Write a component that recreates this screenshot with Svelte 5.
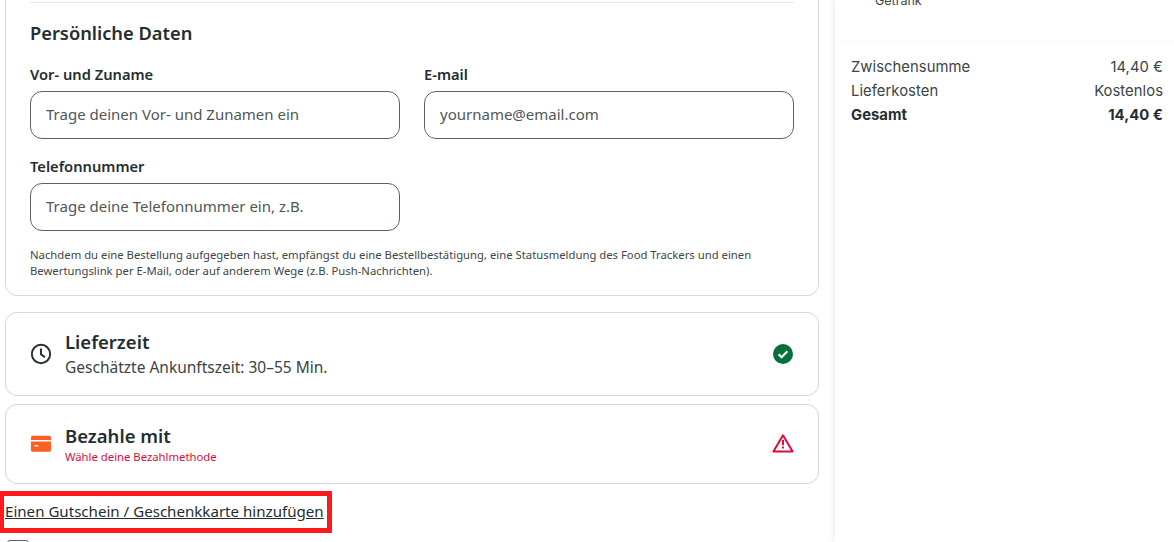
<script>
	const rows = [
		{ label: 'Zwischensumme', value: '14,40 €' },
		{ label: 'Lieferkosten', value: 'Kostenlos' },
		{ label: 'Gesamt', value: '14,40 €', total: true }
	];
</script>

<div class="page">
	<main class="main">
		<section class="card personal">
			<div class="rule"></div>
			<h2>Persönliche Daten</h2>
			<div class="fields">
				<label class="field">
					<span>Vor- und Zuname</span>
					<input type="text" placeholder="Trage deinen Vor- und Zunamen ein" />
				</label>
				<label class="field">
					<span>E-mail</span>
					<input type="text" placeholder="yourname@email.com" />
				</label>
				<label class="field">
					<span>Telefonnummer</span>
					<input type="text" placeholder="Trage deine Telefonnummer ein, z.B." />
				</label>
			</div>
			<p class="notice">
				Nachdem du eine Bestellung aufgegeben hast, empfängst du eine Bestellbestätigung, eine Statusmeldung des Food Trackers und einen Bewertungslink per E-Mail, oder auf anderem Wege (z.B. Push-Nachrichten).
			</p>
		</section>

		<section class="card step delivery">
			<svg class="icon" viewBox="0 0 24 24" aria-hidden="true">
				<circle cx="12" cy="12" r="10" fill="none" stroke="#242e30" stroke-width="2.1" />
				<path d="M12 6.800V12.400L15.600 15" fill="none" stroke="#242e30" stroke-width="2.100" stroke-linecap="round" stroke-linejoin="round" />
			</svg>
			<div class="step-text">
				<h3>Lieferzeit</h3>
				<p>Geschätzte Ankunftszeit: 30–55 Min.</p>
			</div>
			<svg class="status" viewBox="0 0 20 20" aria-hidden="true">
				<circle cx="10" cy="10" r="10" fill="#04703c" />
				<path d="M5.600 10.300L8.600 13.200L14.400 7.200" fill="none" stroke="#fff" stroke-width="2.200" />
			</svg>
		</section>

		<section class="card step payment">
			<svg class="icon" viewBox="0 0 24 24" aria-hidden="true">
				<path d="M3 3H21A2 2 0 0 1 23 5V7.500H1V5A2 2 0 0 1 3 3Z" fill="#fa5f25" />
				<path fill-rule="evenodd" d="M1 9.200H23V18.500A2 2 0 0 1 21 20.500H3A2 2 0 0 1 1 18.500ZM5 13.200V14.800H9V13.200Z" fill="#fa5f25" />
			</svg>
			<div class="step-text">
				<h3>Bezahle mit</h3>
				<p class="error">Wähle deine Bezahlmethode</p>
			</div>
			<svg class="status warn" viewBox="0 0 22 20" aria-hidden="true">
				<path d="M11 1.300L20.600 17.500H1.400Z" fill="none" stroke="#df0b3c" stroke-width="2" stroke-linejoin="round" />
				<path d="M11 6V11.200M11 12.600V14.600" fill="none" stroke="#df0b3c" stroke-width="2" />
			</svg>
		</section>

		<a class="voucher" href="#voucher">Einen Gutschein / Geschenkkarte hinzufügen</a>
		<div class="checkbox"></div>
	</main>

	<aside class="side">
		<div class="item-note">Getränk</div>
		<div class="totals">
			{#each rows as row}
				<div class="row" class:total={row.total}>
					<span>{row.label}</span>
					<span>{row.value}</span>
				</div>
			{/each}
		</div>
	</aside>
</div>

<style>
	:global(body) {
		margin: 0;
		background: #fff;
		overflow: hidden;
	}

	.page {
		display: flex;
		height: 542px;
		overflow: hidden;
		font-family: "Noto Sans", "Open Sans", sans-serif;
		color: #242e30;
	}

	.main {
		width: 835px;
		flex-shrink: 0;
		padding: 0 16px 0 5px;
		box-sizing: border-box;
	}

	.card {
		border: 1px solid #d7d7d7;
		border-radius: 12px;
		background: #fff;
		box-sizing: border-box;
	}

	.personal {
		margin-top: -20px;
		height: 316px;
		padding: 21px 24px 0;
	}

	.rule {
		height: 1px;
		background: #e8e8e8;
	}

	h2 {
		margin: 18px 0 0;
		font-size: 18.3px;
		line-height: 24px;
		font-weight: 600;
	}

	.fields {
		display: grid;
		grid-template-columns: 370px 370px;
		column-gap: 24px;
		row-gap: 18px;
		margin-top: 20px;
	}

	.field {
		display: flex;
		flex-direction: column;
		gap: 8px;
	}

	.field span {
		font-size: 14.7px;
		line-height: 18px;
		font-weight: 600;
	}

	.field input {
		height: 48px;
		padding: 0 15px 2px;
		border: 1px solid #5c6364;
		border-radius: 12px;
		box-sizing: border-box;
		font: inherit;
		font-size: 15px;
		outline: none;
	}

	.field input::placeholder {
		color: #4f5759;
		opacity: 1;
	}

	.notice {
		margin: 16px 0 0;
		font-size: 11.3px;
		line-height: 16px;
		color: #3d4648;
	}

	.step {
		display: flex;
		align-items: center;
		padding: 0 25px 0 24px;
	}

	.delivery {
		height: 84px;
		margin-top: 16px;
	}

	.payment {
		height: 80px;
		margin-top: 8px;
	}

	.icon {
		width: 22px;
		height: 22px;
		flex-shrink: 0;
	}

	.step-text {
		flex: 1;
		margin-left: 13px;
	}

	h3 {
		margin: 0;
		font-size: 18.5px;
		line-height: 24px;
		font-weight: 600;
	}

	.step-text p {
		margin: 2px 0 0;
		font-size: 15.5px;
		line-height: 22px;
		color: #3a4446;
	}

	.step-text p.error {
		margin: 1px 0 0;
		font-size: 11.3px;
		line-height: 16px;
		color: #df0b3c;
	}

	.status {
		width: 20px;
		height: 20px;
		flex-shrink: 0;
	}

	.status.warn {
		width: 22px;
		margin-right: -1px;
	}

	.voucher {
		display: block;
		width: fit-content;
		margin: 7px 0 0 -6px;
		padding: 5px 3px 7px 1px;
		border: 5px solid #ff1a1f;
		font-size: 15.1px;
		line-height: 20px;
		color: #242e30;
		text-decoration: underline;
	}

	.checkbox {
		width: 22px;
		height: 20px;
		margin: 7px 0 0 2px;
		border: 1px solid #5c6364;
		border-radius: 3px;
		box-sizing: border-box;
	}

	.side {
		flex: 1;
		min-width: 0;
		padding: 0 11px 0 16px;
		box-shadow: -3px 0 6px rgba(0, 0, 0, 0.06);
		font-family: "Inter", "Open Sans", sans-serif;
	}

	.item-note {
		margin: -7px 0 0 24px;
		height: 16px;
		font-size: 12.5px;
		line-height: 16px;
		color: #3d4648;
	}

	.totals {
		margin: 31px -11px 0 -16px;
		padding: 16px 11px 0 16px;
		border-top: 1px solid #fafafa;
		display: flex;
		flex-direction: column;
		gap: 4px;
	}

	.row {
		display: flex;
		justify-content: space-between;
		font-size: 14.8px;
		line-height: 20px;
		letter-spacing: 0.05px;
		color: #3a4446;
	}

	.row.total {
		font-weight: 700;
		color: #242e30;
	}
</style>
